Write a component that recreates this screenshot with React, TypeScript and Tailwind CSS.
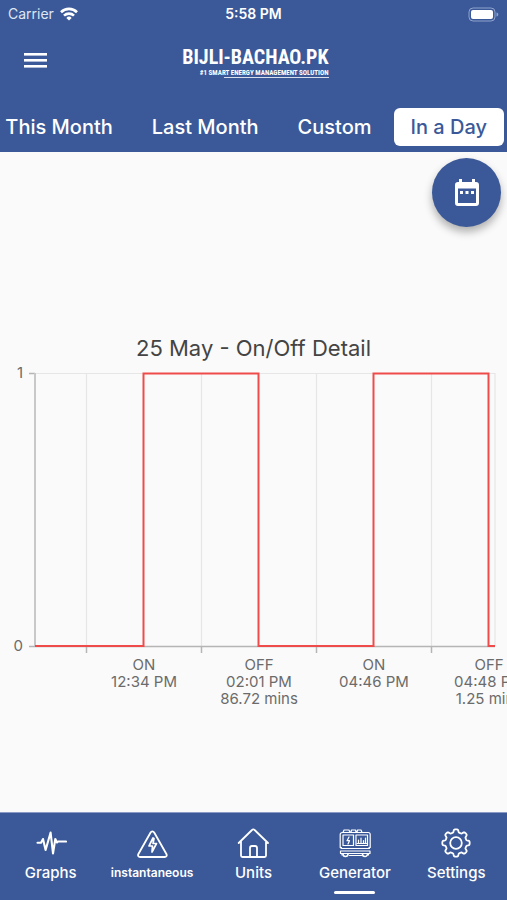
import type { ReactNode } from "react";

const TABS = ["This Month", "Last Month", "Custom", "In a Day"];

const EVENTS = [
  { x: 144, lines: ["ON", "12:34 PM"] },
  { x: 259, lines: ["OFF", "02:01 PM", "86.72 mins"] },
  { x: 374, lines: ["ON", "04:46 PM"] },
  { x: 489, lines: ["OFF", "04:48 PM", "1.25 mins"] },
];

const GRID_X = [86, 201, 316, 431];

// Outline of an eight-toothed gear with rounded teeth, centred on (16, 16).
const GEAR_OUTLINE = Array.from({ length: 160 }, (_, i) => {
  const angle = (i / 160) * Math.PI * 2;
  const radius = 12.2 + 1.5 * Math.tanh(2.5 * Math.cos(8 * angle));
  return `${(16 + radius * Math.sin(angle)).toFixed(2)},${(16 - radius * Math.cos(angle)).toFixed(2)}`;
}).join(" ");

function StatusBar() {
  return (
    <div className="grid h-7 grid-cols-3 items-center px-2 text-[14px] leading-4">
      <div className="flex items-center gap-1.5 text-[#dfe6f3]">
        <span>Carrier</span>
        <svg width="18" height="14" viewBox="0 0 18 14" fill="none" stroke="#fff" strokeWidth="2.6" aria-label="Wi-Fi">
          <path d="M1 5.2a11.4 11.4 0 0 1 16 0" />
          <path d="M4 8.6a7.2 7.2 0 0 1 10 0" />
          <path d="M9 13.6 6.3 10.9a3.9 3.9 0 0 1 5.4 0Z" fill="#fff" stroke="none" />
        </svg>
      </div>
      <div className="text-center font-semibold">5:58 PM</div>
      <svg className="justify-self-end" width="31" height="15" viewBox="0 0 31 15" aria-label="Battery full">
        <rect x="1" y="1" width="26" height="13" rx="4" fill="none" stroke="#8fa3cc" />
        <rect x="3" y="3" width="22" height="9" rx="2" fill="#fff" />
        <path d="M28.5 5.5v4c1.2-.4 1.8-1.1 1.8-2s-.6-1.6-1.8-2Z" fill="#8fa3cc" />
      </svg>
    </div>
  );
}

function Logo() {
  return (
    <div className="flex w-[150px] flex-col items-end font-['Liberation_Sans_Narrow','Roboto_Condensed','Roboto',sans-serif] font-bold whitespace-nowrap">
      <span className="text-[20px] leading-6">BIJLI-BACHAO.PK</span>
      <span className="text-[7px] leading-2">#1 SMART ENERGY MANAGEMENT SOLUTION</span>
      <span className="h-px w-[105px] bg-white/80" />
    </div>
  );
}

function Header() {
  return (
    <header className="bg-[#3b5998] text-white">
      <StatusBar />
      <div className="grid h-[74px] grid-cols-[1fr_auto_1fr] items-center px-6">
        <button type="button" aria-label="Open menu" className="w-[23px] pb-2">
          <svg width="23" height="16" viewBox="0 0 23 16" fill="#fff">
            <rect y="0" width="23" height="2.6" />
            <rect y="6" width="23" height="2.6" />
            <rect y="12" width="23" height="2.6" />
          </svg>
        </button>
        <div className="pb-2">
          <Logo />
        </div>
      </div>
      <nav className="flex h-[50px] justify-end gap-[5px] overflow-hidden px-[3px] pt-[6px]" aria-label="Period">
        {TABS.map((tab) => (
          <button
            key={tab}
            type="button"
            className={
              tab === "In a Day"
                ? "h-[38px] shrink-0 rounded-md bg-white px-[17px] text-[20px] leading-6 font-medium whitespace-nowrap text-[#3b5998]"
                : "h-[38px] shrink-0 rounded-md px-[17px] text-[20px] leading-6 font-medium whitespace-nowrap"
            }
          >
            {tab}
          </button>
        ))}
      </nav>
    </header>
  );
}

function Chart() {
  return (
    <svg viewBox="0 0 507 350" className="block w-full" role="img" aria-label="Generator on and off times for 25 May">
      <g stroke="#e6e6e6" strokeWidth="1.2">
        <path d="M35 11.5H495V284" fill="none" />
        {GRID_X.map((x) => (
          <path key={x} d={`M${x + 0.5} 11V284`} />
        ))}
      </g>
      <g stroke="#b5b5b5" strokeWidth="1.5">
        <path d="M29 11.5H35M29 284.500H495" />
        {GRID_X.map((x) => (
          <path key={x} d={`M${x + 0.5} 284V291`} />
        ))}
        <path d="M35 11V284" stroke="#c8c8c8" strokeWidth="2" />
      </g>
      <path
        d="M35 284H143.500V11.500H258.500V284H373.500V11.500H488.500V284H495"
        fill="none"
        stroke="#ef4b4b"
        strokeWidth="2"
      />
      <g fill="#6b6b6b" fontSize="15">
        <text x="23" y="16" textAnchor="end">1</text>
        <text x="23" y="289" textAnchor="end">0</text>
        {EVENTS.map((event) =>
          event.lines.map((line, i) => (
            <text key={event.x + line} x={event.x} y={308 + i * 17} textAnchor="middle">
              {line}
            </text>
          )),
        )}
      </g>
    </svg>
  );
}

function NavIcon({ children }: { children: ReactNode }) {
  return (
    <svg
      width="32"
      height="32"
      viewBox="0 0 32 32"
      fill="none"
      stroke="#fff"
      strokeWidth="1.8"
      strokeLinecap="round"
      strokeLinejoin="round"
      aria-hidden="true"
    >
      {children}
    </svg>
  );
}

const NAV = [
  {
    label: "Graphs",
    icon: <path d="M2.500 15.700H6L8 12l2.600 11L15.600 5.500 18 26.500 20.300 12l1.700 3.500 1-1H31" strokeWidth="2.1" />,
  },
  {
    label: "instantaneous",
    icon: (
      <>
        <path d="M14.600 5.500 2.400 27c-.8 1.500 0 3 1.700 3h24.600c1.700 0 2.500-1.500 1.700-3L18.200 5.500c-.9-1.500-2.700-1.500-3.600 0Z" />
        <path d="m17 11-4 8h3.500l-.5 6 4.500-8.500H17l1-5Z" strokeWidth="1.7" />
      </>
    ),
  },
  {
    label: "Units",
    icon: (
      <path d="M4 14v14.500a1.500 1.500 0 0 0 1.500 1.500H13v-9a2 2 0 0 1 2-2h3a2 2 0 0 1 2 2v9h7.500a1.500 1.500 0 0 0 1.500-1.500V14M1.700 16 15 3a1.800 1.800 0 0 1 2.600 0L31 16M13 30h7" />
    ),
  },
  {
    label: "Generator",
    icon: (
      <g strokeWidth="1.2">
        <path d="M2.500 20.500H1.200V7.500a2 2 0 0 1 2-2h26a2 2 0 0 1 2 2V20.500H30M4 5.500 5 3h5l1 2.500M12 5l.5-2h4l.5 2M18 5l.5-2H22l1 2.500" />
        <rect x="4" y="8" width="10.500" height="10.500" />
        <rect x="17" y="8" width="11.500" height="10.500" />
        <path d="m10 10-2 3.700h2.500L9 17M19.500 16v-3M22 16v-5M24.500 16v-2.500M26.500 16v-5M18 16.500h9.500" />
        <path d="M2 21.500h28.500M1.500 24h29.500v2.500H1.500ZM3 26.500V28M29.500 26.500V28M10.500 28.500h12" />
        <path d="M4 27a2.300 2.300 0 0 0 5 0M23.500 27a2.300 2.300 0 0 0 5 0" strokeWidth="1.600" />
      </g>
    ),
  },
  {
    label: "Settings",
    icon: (
      <>
        <polygon points={GEAR_OUTLINE} />
        <circle cx="16" cy="16" r="5.800" />
      </>
    ),
  },
];

function BottomNav() {
  return (
    <nav className="grid h-[88px] grid-cols-5 border-t border-[#8b9cc4] bg-[#3b5998] text-white" aria-label="Main">
      {NAV.map(({ label, icon }) => (
        <a key={label} href="#" className="flex flex-col items-center pt-[14px]">
          <NavIcon>{icon}</NavIcon>
          <span
            className={
              label === "instantaneous"
                ? "mt-[5px] text-[12px] leading-[18px] font-semibold"
                : "mt-[5px] text-[15px] leading-[18px] font-medium"
            }
          >
            {label}
          </span>
          {label === "Generator" && <span className="mt-[9px] h-[3px] w-[41px] rounded-sm bg-white" />}
        </a>
      ))}
    </nav>
  );
}

export default function App() {
  return (
    <div className="flex min-h-screen flex-col overflow-x-hidden bg-[#fafafa] font-['Inter',sans-serif]">
      <Header />
      <main className="relative flex flex-1 flex-col pt-[182px]">
        <button
          type="button"
          aria-label="Pick a date"
          className="absolute top-[6px] right-[6px] flex size-[69px] items-center justify-center rounded-full bg-[#3b5998] shadow-[0_5px_8px_rgba(0,0,0,0.3)]"
        >
          <svg width="24" height="27" viewBox="0 0 24 27" aria-hidden="true">
            <path
              d="M4 0h3v3h10V0h3v3h1a3 3 0 0 1 3 3v18a3 3 0 0 1-3 3H3a3 3 0 0 1-3-3V6a3 3 0 0 1 3-3h1ZM3 9.500V24h18V9.500Z"
              fill="#fff"
              fillRule="evenodd"
            />
            <path d="M5 12h3v3H5ZM10.500 12h3v3h-3ZM16 12h3v3h-3Z" fill="#fff" />
          </svg>
        </button>
        <h1 className="text-center text-[22px] leading-7 text-[#444]">25 May - On/Off Detail</h1>
        <Chart />
      </main>
      <BottomNav />
    </div>
  );
}
